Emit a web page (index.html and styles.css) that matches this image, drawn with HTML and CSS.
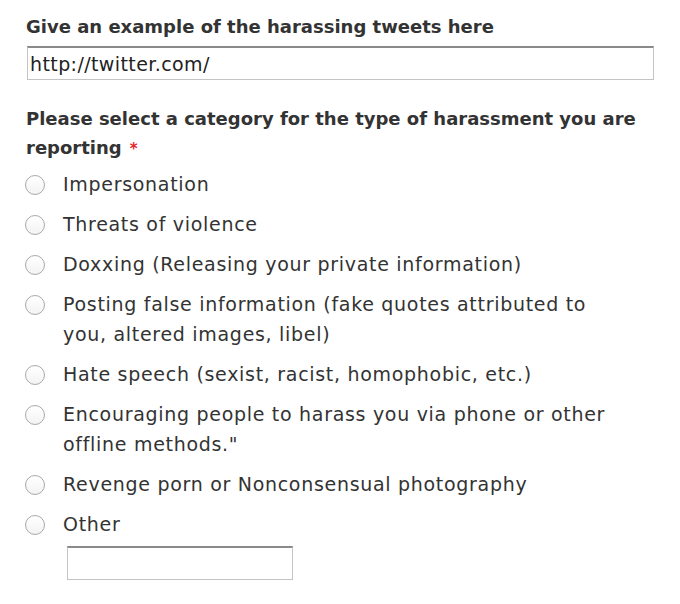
FILE: index.html
```html
<!DOCTYPE html>
<html>
    <head>
        <title>Report Harassment</title>
        <meta charset="UTF-8">
        <meta name="viewport" content="width=device-width, initial-scale=1.0">
        <link rel="stylesheet" href="styles.css">
    </head>
    <body>
        <form class="report">
            <label class="field-label" for="tweetUrl">Give an example of the harassing tweets here</label>
            <input type="text" id="tweetUrl" class="text-input url-input" value="http://twitter.com/">

            <div class="field-label category-label">Please select a category for the type of harassment you are reporting<span class="required">*</span></div>
            <div class="options">
                <label class="option"><input type="radio" name="category"><span class="dot"></span><span class="option-text">Impersonation</span></label>
                <label class="option"><input type="radio" name="category"><span class="dot"></span><span class="option-text">Threats of violence</span></label>
                <label class="option"><input type="radio" name="category"><span class="dot"></span><span class="option-text">Doxxing (Releasing your private information)</span></label>
                <label class="option"><input type="radio" name="category"><span class="dot"></span><span class="option-text">Posting false information (fake quotes attributed to you, altered images, libel)</span></label>
                <label class="option"><input type="radio" name="category"><span class="dot"></span><span class="option-text">Hate speech (sexist, racist, homophobic, etc.)</span></label>
                <label class="option"><input type="radio" name="category"><span class="dot"></span><span class="option-text">Encouraging people to harass you via phone or other offline methods."</span></label>
                <label class="option"><input type="radio" name="category"><span class="dot"></span><span class="option-text">Revenge porn or Nonconsensual photography</span></label>
                <label class="option"><input type="radio" name="category"><span class="dot"></span><span class="option-text">Other</span></label>
            </div>
            <input type="text" class="text-input other-input">
        </form>
    </body>
</html>
```
FILE: styles.css
```css
body {
    margin: 0;
    padding: 0;
    background-color: #fff;
    color: #333;
    font-family: "DejaVu Sans", Verdana, sans-serif;
}
.report {
    display: flex;
    flex-direction: column;
    align-items: flex-start;
    padding: 12px 26px 0 26px;
}
.field-label {
    font-size: 18px;
    font-weight: bold;
    line-height: 30px;
    color: #333;
}
.category-label {
    line-height: 29px;
    margin-top: 24px;
    width: 630px;
}
.required {
    color: #e4242b;
    font-size: 15px;
    margin-left: 8px;
}
.text-input {
    box-sizing: border-box;
    height: 34px;
    border: 1px solid #c4c4c4;
    border-top: 2px solid #8a8a8a;
    background: #fff;
    font-family: "DejaVu Sans", Verdana, sans-serif;
    font-size: 19px;
    letter-spacing: 0.4px;
    color: #222;
    padding: 0 2px;
    margin: 0;
}
.url-input {
    width: 627px;
    margin-top: 4px;
    margin-left: 1px;
}
.other-input {
    width: 226px;
    margin-top: 7px;
    margin-left: 41px;
}
.options {
    display: flex;
    flex-direction: column;
    gap: 10px;
    margin-top: 5px;
}
.option {
    display: flex;
    align-items: flex-start;
    font-size: 19px;
    letter-spacing: 0.7px;
    line-height: 30px;
    color: #333;
    cursor: pointer;
}
.option input {
    display: none;
}
.dot {
    flex: none;
    box-sizing: border-box;
    width: 20px;
    height: 20px;
    margin: 6px 18px 0 -1px;
    border: 1.5px solid #a9a9a9;
    border-radius: 50%;
    background: linear-gradient(#fff, #f3f3f3);
}
.option-text {
    width: 560px;
}
```
